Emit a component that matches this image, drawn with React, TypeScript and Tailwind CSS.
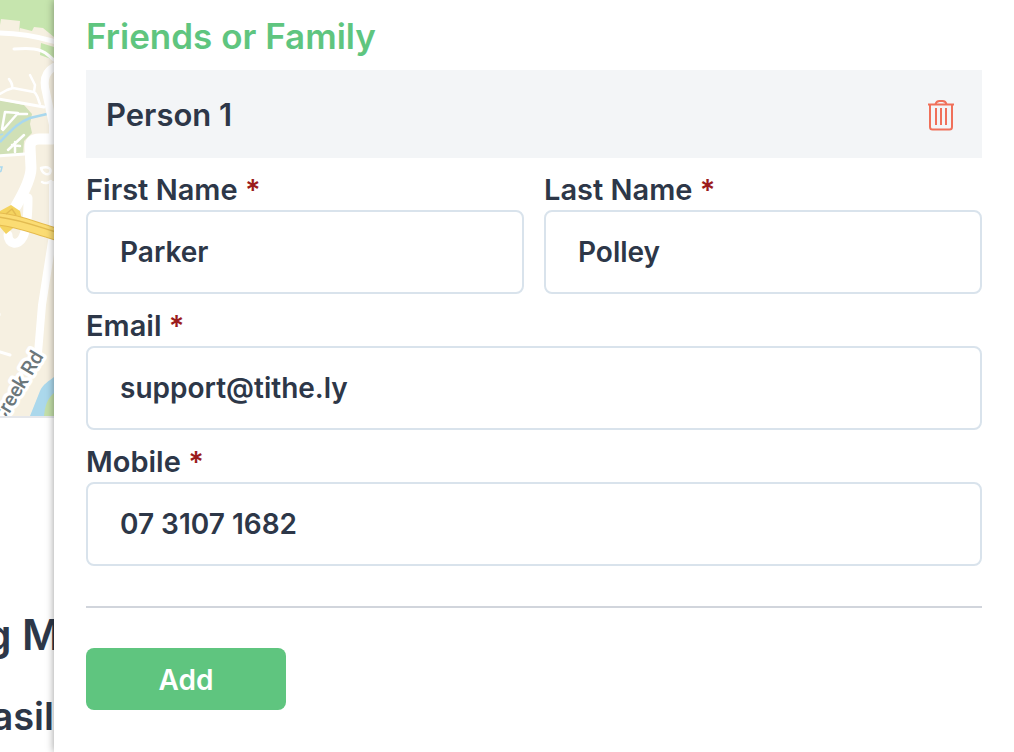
import React, { useState } from 'react';

type Person = { firstName: string; lastName: string; email: string; mobile: string };

const FIELDS: { id: keyof Person; label: string; type: string; wide: boolean }[] = [
  { id: 'firstName', label: 'First Name', type: 'text', wide: false },
  { id: 'lastName', label: 'Last Name', type: 'text', wide: false },
  { id: 'email', label: 'Email', type: 'email', wide: true },
  { id: 'mobile', label: 'Mobile', type: 'tel', wide: true },
];

const EMPTY: Person = { firstName: '', lastName: '', email: '', mobile: '' };

function TrashIcon() {
  return (
    <svg viewBox="0 0 28 32" className="h-8 w-7" fill="none" stroke="#f0705a" strokeWidth="2" aria-hidden="true">
      <path d="M1 5.500h26" />
      <path d="M8.500 5.500C9 3 10.500 2 12.500 2h3c2 0 3.500 1 4 3.500" />
      <path d="M3 6v22a2.500 2.500 0 0 0 2.500 2.500h17A2.500 2.500 0 0 0 25 28V6" />
      <path d="M9 9v17M14 9v17M19 9v17" />
    </svg>
  );
}

function StreetMap() {
  return (
    <svg viewBox="0 0 54 416" className="block h-[416px] w-[54px]" fill="none" aria-hidden="true">
      <rect width="54" height="416" fill="#f6f0e1" />
      <path d="M0 0h54v37l-11-9-9-1-2 4-12-3-1 4 1-11L1 19 0 25z" fill="#c6e5ae" />
      <path d="M41 43l13 4v13l-14-5z" fill="#c6e5ae" />
      <path d="M0 100l24 5 8 9-2 10 2 9-8 8-1 13-23 2z" fill="#d0e0b6" />
      <path d="M0 142C10 132 17 123 30 118l17-4" stroke="#a9d8ee" strokeWidth="2.500" />
      <path d="M0 135l3-1M0 167h2l-1 4-1 1" stroke="#a9d8ee" strokeWidth="1.500" />
      <g stroke="#fff" strokeLinecap="round" strokeLinejoin="round">
        <path d="M-2 33c18 0 38 3 58 9" strokeWidth="5" />
        <path d="M14 49c16-1 26-1 34 6l6 5" strokeWidth="3" />
        <path d="M-2 95l9-5 6-2 21 4c4 3 4 8 6 12M9 79c3 4 4 6 3 9M30 75l5 10-1 7" strokeWidth="2.500" />
        <path d="M-2 99l46 8" strokeWidth="3" />
        <path d="M2 129l3-17 13 1-15 17M18 114h9M8 150l16-15M12 145l8 1M15 142v10" strokeWidth="2.500" />
        <path d="M54 67c-9 5-11 14-8 25l7 33v15" strokeWidth="8" />
        <path d="M-2 156l27-2" strokeWidth="3" />
        <path d="M52 139H39c-6 0-9 3-9 8l1 21c0 10-8 26-15 38" strokeWidth="11" />
        <path d="M41 168c8-2 11 1 9 5-3 3-8 0-9-5M42 182c3 2 7 1 9-1" strokeWidth="2.500" />
        <path d="M53 185v50l-11 70-4 48" strokeWidth="8" />
        <path d="M28 198c0 20-1 31-5 39-5 10-15 7-15-2" strokeWidth="9" />
        <path d="M-1 315v-1M0 352l10 3" strokeWidth="3" />
      </g>
      <path d="M0 211l11-6 9 6 2 9-10 9-6 5-6-7" fill="#f4d35f" />
      <path d="M-2 219c19 1 36 9 58 15" stroke="#e5bb4e" strokeWidth="13" />
      <path d="M-2 219c19 1 36 9 58 15" stroke="#fbdc73" strokeWidth="11" />
      <path d="M-2 217c20 2 38 9 58 15M6 214l6-5 4 6" stroke="#e2bb51" strokeWidth="1.500" />
      <path d="M30 416l10-25c3-7 9-10 14-14v39z" fill="#abd8ec" />
      <path d="M54 393c-7 6-9 13-10 23h10z" fill="#c3dfa9" />
      <text
        transform="translate(44 356) rotate(-59)"
        textAnchor="end"
        stroke="#fff"
        strokeWidth="7"
        strokeLinejoin="round"
        paintOrder="stroke"
        fill="#6b777b"
        className="font-[Roboto] text-[20px] font-medium"
      >
        Creek Rd
      </text>
    </svg>
  );
}

function App() {
  const [people, setPeople] = useState<Person[]>([
    { firstName: 'Parker', lastName: 'Polley', email: 'support@tithe.ly', mobile: '07 3107 1682' },
  ]);

  const update = (index: number, field: keyof Person, value: string) => {
    setPeople(people.map((p, i) => (i === index ? { ...p, [field]: value } : p)));
  };

  return (
    <div className="flex min-h-screen bg-white font-[Inter,sans-serif] font-semibold text-[#2d3748]">
      <aside className="w-[54px] shrink-0 overflow-hidden">
        <div className="border-b-2 border-gray-200">
          <StreetMap />
        </div>
        <div className="mt-48 flex justify-center pr-2 whitespace-nowrap text-[42px] leading-[50px]">g M</div>
        <div className="mt-8 flex justify-end whitespace-nowrap text-[38px] leading-[48px]">asil</div>
      </aside>

      <main className="relative min-w-0 flex-1 bg-white px-8 pt-2 pb-10 shadow-[0_0_8px_rgba(0,0,0,0.4)]">
        <h2 className="mb-[6px] text-[35px] leading-14 text-[#5fc57f]">Friends or Family</h2>

        {people.map((person, index) => (
          <section key={index} className="mb-10">
            <div className="flex h-[88px] items-center justify-between bg-[#f3f5f7] pt-[2px] pr-[27px] pl-5">
              <h3 className="text-[31px] leading-10">Person {index + 1}</h3>
              <button
                type="button"
                aria-label="Remove"
                onClick={() => setPeople(people.filter((_, i) => i !== index))}
              >
                <TrashIcon />
              </button>
            </div>
            <div className="mt-3 grid grid-cols-2 gap-x-5 gap-y-3">
              {FIELDS.map((field) => (
                <div key={field.id} className={field.wide ? 'col-span-2' : ''}>
                  <label htmlFor={`${field.id}-${index}`} className="block text-[29px] leading-10">
                    {field.label} <span className="text-[#9b1c1c]">*</span>
                  </label>
                  <input
                    id={`${field.id}-${index}`}
                    type={field.type}
                    value={person[field.id]}
                    onChange={(e) => update(index, field.id, e.target.value)}
                    className="block h-[84px] w-full rounded-lg border-2 border-[#d9e3ec] bg-white px-8 text-[28px]"
                  />
                </div>
              ))}
            </div>
          </section>
        ))}

        <hr className="mb-10 border-t-2 border-gray-300" />

        <button
          type="button"
          onClick={() => setPeople([...people, EMPTY])}
          className="h-[62px] w-[200px] rounded-lg bg-[#5fc57f] pt-[2px] text-[28px] text-white"
        >
          Add
        </button>
      </main>
    </div>
  );
}

export default App;
